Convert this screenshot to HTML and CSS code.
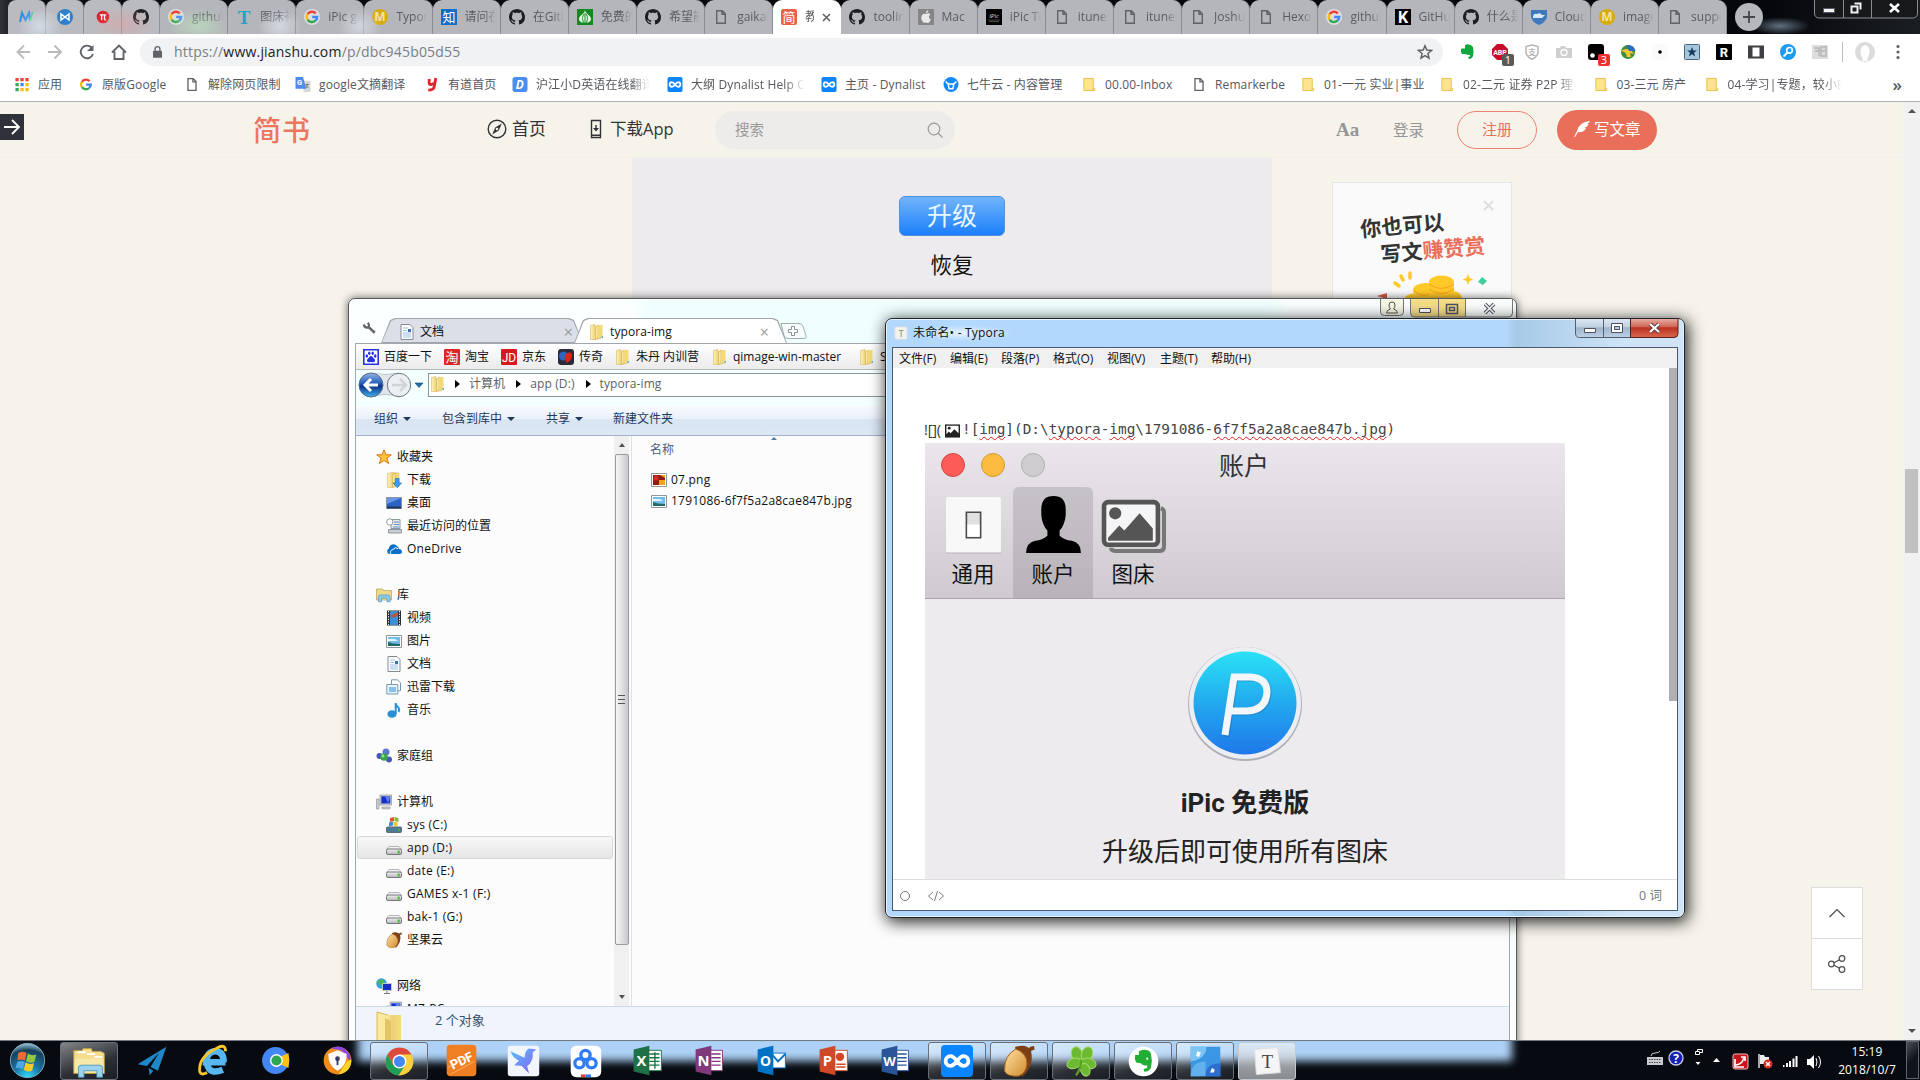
FILE: index.html
```html
<!DOCTYPE html>
<html lang="zh-CN">
<head>
<meta charset="utf-8">
<title>简书</title>
<link rel="stylesheet" href="styles.css">
</head>
<body>
<svg class="defs" width="0" height="0">
<defs>
<linearGradient id="gFold" x1="0" x2="1"><stop offset="0" stop-color="#fff3b5"/><stop offset=".45" stop-color="#ecd277"/><stop offset="1" stop-color="#f6dc7c"/></linearGradient>
<linearGradient id="gP" x1="0" y1="0" x2="0" y2="1"><stop offset="0" stop-color="#2ae2f5"/><stop offset=".5" stop-color="#22a9ee"/><stop offset="1" stop-color="#1f78ea"/></linearGradient>
<linearGradient id="gNut" x1="0" x2="1" y2="1"><stop offset="0" stop-color="#ffe2a0"/><stop offset="1" stop-color="#d08a30"/></linearGradient>
<radialGradient id="gOrb" cx=".5" cy="1" r="1"><stop offset="0" stop-color="#2fe0ff"/><stop offset=".4" stop-color="#1b76a8"/><stop offset=".8" stop-color="#174059"/><stop offset="1" stop-color="#9cc6da"/></radialGradient>
<linearGradient id="gBack" x1="0" y1="0" x2="0" y2="1"><stop offset="0" stop-color="#8fb4e6"/><stop offset=".45" stop-color="#2257b8"/><stop offset=".55" stop-color="#0b2e86"/><stop offset="1" stop-color="#42b3f0"/></linearGradient>
<linearGradient id="gBird" x1="0" y1="0" x2="1" y2="1"><stop offset="0" stop-color="#55c3ff"/><stop offset="1" stop-color="#8a5cf0"/></linearGradient>
<linearGradient id="gRed" x1="0" y1="0" x2="0" y2="1"><stop offset="0" stop-color="#e8b3a6"/><stop offset=".45" stop-color="#d0675a"/><stop offset=".5" stop-color="#bb3220"/><stop offset="1" stop-color="#d8694c"/></linearGradient>
<linearGradient id="gCtl" x1="0" y1="0" x2="0" y2="1"><stop offset="0" stop-color="#dfe9f4"/><stop offset=".45" stop-color="#c3d2e2"/><stop offset=".5" stop-color="#a0b4ca"/><stop offset="1" stop-color="#bdd2e6"/></linearGradient>
<linearGradient id="gDrive" x1="0" y1="0" x2="0" y2="1"><stop offset="0" stop-color="#f2f2f4"/><stop offset="1" stop-color="#b4b4ba"/></linearGradient>
</defs>
</svg>
<svg class="symbols">
<symbol id="github" viewBox="0 0 16 16"><path fill="#1b1f23" d="M8 0C3.58 0 0 3.58 0 8c0 3.54 2.29 6.53 5.47 7.59.4.07.55-.17.55-.38 0-.19-.01-.82-.01-1.49-2.01.37-2.53-.49-2.69-.94-.09-.23-.48-.94-.82-1.13-.28-.15-.68-.52-.01-.53.63-.01 1.08.58 1.23.82.72 1.21 1.87.87 2.33.66.07-.52.28-.87.51-1.07-1.78-.2-3.64-.89-3.64-3.95 0-.87.31-1.59.82-2.15-.08-.2-.36-1.02.08-2.12 0 0 .67-.21 2.2.82.64-.18 1.32-.27 2-.27s1.36.09 2 .27c1.53-1.04 2.2-.82 2.2-.82.44 1.1.16 1.92.08 2.12.51.56.82 1.27.82 2.15 0 3.07-1.87 3.75-3.65 3.95.29.25.54.73.54 1.48 0 1.07-.01 1.93-.01 2.2 0 .21.15.46.55.38A8.01 8.01 0 0 0 16 8c0-4.42-3.58-8-8-8Z"/></symbol>
<symbol id="google" viewBox="0 0 16 16"><circle cx="8" cy="8" r="8" fill="#fff" opacity=".55"/><g fill="none" stroke-width="2.4"><path stroke="#ea4335" d="M3.6 5.2A5.2 5.2 0 0 1 11.8 4.4"/><path stroke="#fbbc05" d="M3.6 5.2a5.2 5.2 0 0 0 0 5.6"/><path stroke="#34a853" d="M3.6 10.8a5.2 5.2 0 0 0 7.8.9"/><path stroke="#4285f4" d="M11.4 11.7A5.2 5.2 0 0 0 13.2 8H8.2"/></g></symbol>
<symbol id="page" viewBox="0 0 16 16"><path fill="none" stroke="#5f6368" stroke-width="1.4" d="M3.7 1.7h5.6l3 3.2v9.4H3.7zM9 2v3.2h3"/></symbol>
<symbol id="mx" viewBox="0 0 16 16"><path fill="none" stroke="#2b8de3" stroke-width="2" d="M2 13 4 4l3.5 7L11 4l1 8"/><path stroke="#35d07f" stroke-width="1.8" d="M12 12l2.5-9"/></symbol>
<symbol id="bow" viewBox="0 0 16 16"><circle cx="8" cy="8" r="8" fill="#2f80c8"/><path fill="none" stroke="#fff" stroke-width="1.5" d="M4 5v6l8-6v6z"/></symbol>
<symbol id="pi" viewBox="0 0 16 16"><circle cx="8" cy="8" r="6.3" fill="#d5212b"/><path fill="none" stroke="#fff" stroke-width="1.3" d="M4.8 5.9h6.4M6.6 6v5M9.5 6v4q0 1 1.2 1"/></symbol>
<symbol id="ty" viewBox="0 0 16 16"><text x="8" y="15" text-anchor="middle" font-size="19" font-weight="700" font-family="Liberation Serif" fill="#1ea6c0">T</text></symbol>
<symbol id="mm" viewBox="0 0 16 16"><circle cx="8" cy="8" r="8" fill="#d6ab10"/><text x="8" y="12.3" text-anchor="middle" font-size="12" font-weight="700" font-family="Open Sans" fill="#f3e3a3">M</text></symbol>
<symbol id="zhi" viewBox="0 0 16 16"><path fill="#0f6fc5" d="M0 0h16v16H0z"/><text x="8" y="12.8" text-anchor="middle" font-size="13" font-family="Noto Sans CJK SC" fill="#fff">知</text></symbol>
<symbol id="garlic" viewBox="0 0 16 16"><path fill="#128a22" d="M0 0h16v16H0z"/><path fill="#e7f2e2" d="M8 1c0 4 6 5 6 9 0 3-4 4-6 4s-6-1-6-4c0-4 6-5 6-9z"/><path stroke="#128a22" fill="none" d="M8 4v10M7 5c-2 3-2 6 0 9M9 5c2 3 2 6 0 9"/></symbol>
<symbol id="jian" viewBox="0 0 16 16"><rect width="16" height="16" rx="2" fill="#e8624a"/><text x="8" y="12.8" text-anchor="middle" font-size="13" font-family="Noto Sans CJK SC" fill="#fff">简</text></symbol>
<symbol id="apple" viewBox="0 0 16 16"><path fill="#858585" d="M0 0h16v16H0z"/><path fill="#e8e8e8" d="M8 5c2-1.3 3.700-.5 4.300.7-2 1.300-1.600 3.900.6 4.800C12 13 10.500 14.700 8 13.500 5.500 14.700 3.500 12 3.300 9 3.200 6 5.500 3.700 8 5zM8 4.200C8 2.500 9 1.500 10.300 1.300 10.300 3 9.400 4 8 4.200z"/></symbol>
<symbol id="ipic" viewBox="0 0 16 16"><path d="M0 0h16v16H0z"/><text x="8" y="9" text-anchor="middle" font-size="6" font-style="italic" font-family="Liberation Serif" fill="#ddd">iPic</text><path stroke="#777" stroke-width=".6" d="M2 11h12M3 12.500h10"/></symbol>
<symbol id="kk" viewBox="0 0 16 16"><path d="M0 0h16v16H0z"/><text x="8" y="14" text-anchor="middle" font-size="16" font-weight="700" font-family="Roboto" fill="#fff">K</text></symbol>
<symbol id="cloud" viewBox="0 0 16 16"><path fill="#3e78bd" d="M0 1h16v7q-1 5-8 8-7-3-8-8z"/><path fill="#dbe8f5" d="M2 7q1-3 4-2 3-2 5 1h3L11 9H2z"/></symbol>
<symbol id="gtr" viewBox="0 0 16 16"><path fill="#d8d8d8" d="M6 4h10v12H9z"/><path fill="#4f8af0" d="M0 0h8l3.500 12.500H0z"/><text x="4.500" y="8.500" text-anchor="middle" font-size="8" font-weight="700" font-family="Roboto" fill="#fff">G</text><path stroke="#777" fill="none" d="M10.500 8h4M12.500 7v1q0 3-2 4M11 9q2 2 3 3"/></symbol>
<symbol id="youdao" viewBox="0 0 16 16"><path fill="none" stroke="#e3242b" stroke-width="3" d="M5 2v4q0 2 2 2t4-2M12 1 10.500 10Q10 14 4 14"/></symbol>
<symbol id="dd" viewBox="0 0 16 16"><rect width="16" height="16" rx="3" fill="#4a8ff0"/><text x="8" y="12.600" text-anchor="middle" font-size="13" font-weight="700" font-style="italic" font-family="Open Sans" fill="#fff">D</text></symbol>
<symbol id="dyna" viewBox="0 0 16 16"><rect width="16" height="16" rx="2" fill="#0a84ff"/><path fill="none" stroke="#fff" stroke-width="1.900" d="M8 8C6.500 6 5.700 5.600 4.700 5.600a2.400 2.400 0 0 0 0 4.800C5.700 10.400 6.500 10 8 8s2.300-2.400 3.300-2.400a2.400 2.400 0 0 1 0 4.800C10.300 10.400 9.500 10 8 8z"/></symbol>
<symbol id="niu" viewBox="0 0 16 16"><circle cx="8" cy="8" r="8" fill="#1489ff"/><path fill="none" stroke="#fff" stroke-width="1.600" d="M2.500 4.500q1 3 5.500 3t5.500-3M5 7.500l1 5h4l1-5"/></symbol>
<symbol id="cfold" viewBox="0 0 16 16"><path fill="#ffe48f" stroke="#e7bf43" d="M2.500 1.500h10v10.500h1.500v2.500H2.500zM12.500 12l-1 2.500"/></symbol>
<symbol id="fold" viewBox="0 0 16 16"><path fill="url(#gFold)" stroke="#cfae55" stroke-width=".5" d="M1.500 1.500 6 .5V3h0l6-1.500v13L6 15.500H1.500z"/><path fill="#f8e7a0" stroke="#c9a347" stroke-width=".5" d="M6.500 3.500 9 .8V14l-2.500 1.700z"/><path fill="#f4d978" d="M9 1h4.500v13H9z"/><path fill="#5fb4d8" d="M12.500 12h1.500v2h-1.500z"/></symbol>
<symbol id="doc" viewBox="0 0 16 16"><path fill="#fdfdfd" stroke="#858b93" d="M2 .5h9l3 3v12H2z"/><path stroke="#9fc0e6" d="M4 4h5M4 6.500h4M4 9h8M4 11h8M4 13h8"/><path fill="#3570b8" d="M9 5h3v3H9z"/></symbol>
<symbol id="star" viewBox="0 0 16 16"><path fill="#ffc03a" stroke="#e07a1c" d="m8 .8 2 5h5.300L11 9l1.700 5.700L8 11.500l-4.700 3.200L5 9 .7 5.800H6z"/></symbol>
<symbol id="down" viewBox="0 0 16 16"><path fill="url(#gFold)" stroke="#cfae55" stroke-width=".5" d="M1.500 1.500 6 .5 13 1v13l-7 1.500H1.500z"/><path fill="#f8e7a0" stroke="#c9a347" stroke-width=".5" d="M6.500 3.500 9 .8V14l-2.500 1.700z"/><path fill="#3aa0ea" stroke="#1c6fb5" stroke-width=".7" d="M9.500 6.500h3.500v4.500h2.500L11.300 15.700 7 11h2.500z"/></symbol>
<symbol id="desk" viewBox="0 0 16 16"><path fill="#2c62c4" stroke="#8792a3" d="M.5 2.500h15v11H.5z"/><path fill="#6796e6" d="M1 3h14L1 9z"/><path fill="#1b335d" d="M1 11.500h14v2H1z"/></symbol>
<symbol id="recent" viewBox="0 0 16 16"><path fill="#e4e9ee" stroke="#8d97a1" d="M5 1.500h9v9H5z"/><path fill="#c9ced3" stroke="#8d97a1" d="M2.500 11.500h13v3.500h-13z"/><circle cx="3.800" cy="4" r="3.200" fill="#fff" stroke="#999"/><path stroke="#5b93cb" fill="none" d="M8 4h5M8 6.500h5M7 9h6"/></symbol>
<symbol id="one" viewBox="0 0 16 16"><path fill="#0a6fc9" d="M3 13A3 3 0 0 1 3 7.500 4.500 4.500 0 0 1 11 5a4 4 0 0 1 2 3q3 .5 3 2.800T13 13z"/><path fill="none" stroke="#fff" d="M5 13.500Q3 9.500 7 8.500q2-3 5-1"/></symbol>
<symbol id="lib" viewBox="0 0 16 16"><path fill="#ecd88a" stroke="#b9a14d" stroke-width=".7" d="M.5 2h6l1 1.500h8V13H.5z"/><path fill="#8ccdf0" stroke="#4596c7" stroke-width=".7" d="M2.500 14.800V10q0-2 2-2h7.500q2 0 2 2v4.800h-3V11h-5.500v3.800z"/></symbol>
<symbol id="video" viewBox="0 0 16 16"><path fill="#2b2f33" d="M1 .5h14v15H1z"/><path fill="#3f8ed2" d="M4 1h8v14H4z"/><path fill="#b9563c" d="m4 6 8-4v3L8 8z"/><path stroke="#fff" stroke-dasharray="1.300 1.300" d="M2.500 1v14M13.500 1v14"/></symbol>
<symbol id="pic" viewBox="0 0 16 16"><path fill="#fff" stroke="#8f969c" d="M.5 2.500h15v12H.5z"/><path fill="#72bdea" d="M2 4h12v9H2z"/><path fill="#e6f6ff" d="M2 6h7l3 2H2z"/><path fill="#1d6d66" d="m2 9 5 1.500 7 .5v2H2z"/></symbol>
<symbol id="png" viewBox="0 0 16 16"><path fill="#fff" stroke="#8f969c" d="M.5 1.500h15v13H.5z"/><path fill="#8f1d14" d="M2 3h12v10H2z"/><path fill="#f2a31b" d="M8 8h6v5H8zM9 3h5v3z"/><circle cx="5" cy="6" r="2.500" fill="#d33021"/></symbol>
<symbol id="xl" viewBox="0 0 16 16"><path fill="#fff" stroke="#7698b5" d="M5.500.8h6l3 3v8h-9z"/><path fill="#eaf5ff" stroke="#7698b5" d="M.8 5.500h11v9.500H.8z"/><path fill="#85c0ee" d="M3 8h7v5H3z"/></symbol>
<symbol id="music" viewBox="0 0 16 16"><ellipse cx="6" cy="12" rx="4.600" ry="3.800" fill="#2b8fd6"/><path fill="none" stroke="#2b8fd6" stroke-width="2" d="M9.700 12V1q.3 3 3 5 1 1.500-.2 4"/></symbol>
<symbol id="home" viewBox="0 0 16 16"><circle cx="3.500" cy="8" r="3" fill="#4657b6"/><circle cx="10" cy="4" r="3.500" fill="#5b77cf"/><circle cx="13" cy="11.500" r="3" fill="#4657b6"/><circle cx="8" cy="9" r="3.800" fill="#3aa447"/><circle cx="7" cy="8" r="1.400" fill="#a0e09d"/></symbol>
<symbol id="pc" viewBox="0 0 16 16"><path fill="#cfd2d6" stroke="#8d9298" stroke-width=".7" d="M4 1h11.500v10H4zM.5 5h2.500v10H.5zM6 13h8v1.800H6z"/><path fill="#1730c8" d="M5.300 2.300h9v7.200h-9z"/><path fill="#6080ea" d="m9 2.300 5.300 0-2 7.200z"/></symbol>
<symbol id="drive" viewBox="0 0 16 16"><path fill="#f4f4f6" stroke="#a3a3a8" stroke-width=".8" d="M3 6.500h10l2.500 3H.5z"/><rect x=".5" y="9" width="15" height="5.500" rx="1.500" fill="url(#gDrive)" stroke="#76767c"/><path fill="#35c51f" d="M11.700 10.500h2v3h-2z"/></symbol>
<symbol id="cdrive" viewBox="0 0 16 16"><path fill="#e5542e" d="m4 1 4-1v4l-4 1z"/><path fill="#7fbd3c" d="m8.500 0 4 1v4l-4-1z"/><path fill="#3a8fd6" d="m3 5.500 4-1v4l-4 1z"/><path fill="#f3c42a" d="m7.500 4.500 4 1v4l-4-1z"/><rect x=".5" y="10" width="15" height="5.500" rx="1" fill="#4b7c93" stroke="#5b6d76"/><path fill="#35c51f" d="M12 12h2v2h-2z"/></symbol>
<symbol id="nut" viewBox="0 0 16 16"><path fill="#7d3f14" d="M6 1q6-2 8 2 1.500 6-2.500 11l-2 2z"/><path fill="#7d3f14" d="M12.500 2q1-1.500 3-1.500l.3 1.800-2.300 1z"/><path fill="url(#gNut)" stroke="#a2621f" stroke-width=".5" d="M6.500 2Q12 4 12 9.500 11.500 14 8 15.500 2 16 .8 13 .5 5 6.500 2z"/></symbol>
<symbol id="net" viewBox="0 0 16 16"><circle cx="5.500" cy="5.500" r="5.300" fill="#36a4d8"/><path fill="#4fb648" d="M2 3q4-3 6 0L6 7q-4 0-4-4z"/><path fill="#1730c8" stroke="#c4cad1" d="M6.500 5.500h9v7h-9z"/><path stroke="#777" d="M11 13v2.500M8 15.500h6"/></symbol>
<symbol id="baidu" viewBox="0 0 16 16"><path fill="#fff" stroke="#2932e1" stroke-width="1.600" d="M.8.800h14.400v14.400H.8z"/><g fill="#2932e1"><ellipse cx="3.800" cy="7" rx="1.300" ry="1.700"/><ellipse cx="6.300" cy="4.300" rx="1.200" ry="1.700"/><ellipse cx="9.700" cy="4.300" rx="1.200" ry="1.700"/><ellipse cx="12.200" cy="7" rx="1.300" ry="1.700"/><path d="M8 7q1.500 0 2.500 2 2 1.500 1.500 3.200-.6 1.300-4 .8-3.400.5-4-.8-.5-1.700 1.500-3.200Q6.500 7 8 7z"/></g></symbol>
<symbol id="tao" viewBox="0 0 16 16"><rect width="16" height="16" rx="1" fill="#dd2727"/><text x="8" y="13" text-anchor="middle" font-size="13" font-family="Noto Sans CJK SC" fill="#fff">淘</text></symbol>
<symbol id="jd" viewBox="0 0 16 16"><rect width="16" height="16" rx="1" fill="#d71a20"/><text x="8" y="12.500" text-anchor="middle" font-size="12" font-family="Roboto" fill="#fff">JD</text></symbol>
<symbol id="cq" viewBox="0 0 16 16"><rect width="16" height="16" rx="3" fill="#2a2a38"/><circle cx="5.500" cy="7" r="4.500" fill="#2e63bf"/><path fill="#e22219" d="M7 6q4-5 7-1 1 5-5 9-3-4-2-8z"/></symbol>
<symbol id="feather" viewBox="0 0 16 16"><path fill="currentColor" d="M16 0Q5 1 3 10L0 16l1 0 3-5q6 1 8-4l-2 0 3-1.500q1-1 1.500-2.500l-1.700.2Q15.500 2 16 0z"/></symbol>
</svg>

<div class="desktop">
<section class="chrome">
  <header class="tabs">
    <div class="pins"><i><svg><use href="#mx"/></svg></i><i><svg><use href="#bow"/></svg></i><i><svg><use href="#pi"/></svg></i><i><svg><use href="#github"/></svg></i></div>
    <div class="tab"><svg><use href="#google"/></svg><span>github</span></div>
    <div class="tab"><svg><use href="#ty"/></svg><span>图床神</span></div>
    <div class="tab"><svg><use href="#google"/></svg><span>iPic gi</span></div>
    <div class="tab"><svg><use href="#mm"/></svg><span>Typor</span></div>
    <div class="tab"><svg><use href="#zhi"/></svg><span>请问在</span></div>
    <div class="tab"><svg><use href="#github"/></svg><span>在Gith</span></div>
    <div class="tab"><svg><use href="#garlic"/></svg><span>免费的</span></div>
    <div class="tab"><svg><use href="#github"/></svg><span>希望能</span></div>
    <div class="tab"><svg><use href="#page"/></svg><span>gaikan</span></div>
    <div class="tab active"><svg><use href="#jian"/></svg><span>教</span><svg class="x" viewBox="0 0 9 9"><path d="M1 1l7 7M8 1 1 8"/></svg></div>
    <div class="tab"><svg><use href="#github"/></svg><span>toolin</span></div>
    <div class="tab"><svg><use href="#apple"/></svg><span>Mac</span></div>
    <div class="tab"><svg><use href="#ipic"/></svg><span>iPic To</span></div>
    <div class="tab"><svg><use href="#page"/></svg><span>itunes</span></div>
    <div class="tab"><svg><use href="#page"/></svg><span>itunes</span></div>
    <div class="tab"><svg><use href="#page"/></svg><span>Joshu</span></div>
    <div class="tab"><svg><use href="#page"/></svg><span>Hexo</span></div>
    <div class="tab"><svg><use href="#google"/></svg><span>github</span></div>
    <div class="tab"><svg><use href="#kk"/></svg><span>GitHu</span></div>
    <div class="tab"><svg><use href="#github"/></svg><span>什么是</span></div>
    <div class="tab"><svg><use href="#cloud"/></svg><span>Cloud</span></div>
    <div class="tab"><svg><use href="#mm"/></svg><span>image</span></div>
    <div class="tab"><svg><use href="#page"/></svg><span>suppo</span></div>
    <b class="plus"><svg viewBox="0 0 14 14"><path d="M7 1v12M1 7h12"/></svg></b>
    <svg class="winctl" viewBox="0 0 104 19"><path fill="#16181a" stroke="#8b8e91" d="M.5-1V13q0 5 5 5h93q5 0 5-5V-1M29.500 0v18M57.500 0v18"/><path fill="#f4f4f4" stroke="#555a66" d="M9.500 8.500h11v4h-11z"/><path fill="none" stroke="#f0f0f0" stroke-width="2" d="M37.500 6.500h6v6h-6zM40.500 3.500h6v6"/><path stroke="#fff" stroke-width="2.600" d="m76 4 9 8M85 4l-9 8"/></svg>
  </header>
  <div class="toolbar">
    <svg class="nav" viewBox="0 0 128 18"><g fill="none" stroke-width="1.900"><path stroke="#b9bbbe" d="M14 9H1.500M8 2.500 1.500 9 8 15.500M32 9h13M38.500 2.500 45 9l-6.500 6.500"/><path stroke="#5f6368" d="M75.500 4.500A6.300 6.300 0 1 0 77 11"/><path stroke="#5f6368" d="m96 9.500 7-7 7 7M98.500 8.500V16h9V8.500"/></g><path fill="#5f6368" d="M77.500 2v6H71z"/></svg>
    <div class="omni">
      <svg class="lock" viewBox="0 0 10 13"><rect y="5" width="10" height="8" rx="1" fill="#5f6368"/><path fill="none" stroke="#5f6368" stroke-width="1.500" d="M2.300 5.500V3.300a2.700 2.700 0 0 1 5.400 0v2.200"/></svg>
      <span class="url">https://<b>www.jianshu.com</b>/p/dbc945b05d55</span>
      <svg class="fav" viewBox="0 0 16 16"><path fill="none" stroke="#5f6368" stroke-width="1.500" d="m8 1.800 1.800 4.300 4.700.4-3.600 3 1.100 4.600L8 11.600l-4 2.500 1.100-4.600-3.600-3 4.700-.4z"/></svg>
    </div>
    <div class="exts">
      <i><svg viewBox="0 0 16 16"><path fill="#0fa83c" d="M5 1q5-2 8 2 1 5 0 9-1 3-4 3l-1-2 2-.5V11Q7 11 5 10H2Q0 7 1.500 4.500H5z"/></svg></i>
      <i><svg viewBox="0 0 16 16"><path fill="#c70d2c" d="M5 0h6l5 5v6l-5 5H5l-5-5V5z"/><text x="8" y="10.500" text-anchor="middle" font-size="7" font-weight="700" font-family="Roboto" fill="#fff">ABP</text></svg><em>1</em></i>
      <i><svg viewBox="0 0 16 16"><path fill="none" stroke="#b5b5b5" stroke-width="1.500" d="M8 1 14 2.500V9q-1 4-6 6.300Q3 13 2 9V2.500z"/><text x="8" y="11" text-anchor="middle" font-size="8" font-family="Noto Sans CJK SC" fill="#999">支</text></svg></i>
      <i><svg viewBox="0 0 16 16"><path fill="#cfcfcf" d="M0 4h4l1-2h4l1 2h6v10H0z"/><circle cx="8" cy="8.500" r="3" fill="none" stroke="#fff" stroke-width="1.300"/></svg></i>
      <i><svg viewBox="0 0 16 16"><rect width="16" height="16" rx="3"/><circle cx="4.500" cy="11.500" r="2.300" fill="#fff"/></svg><em class="red">3</em></i>
      <i><svg viewBox="0 0 16 16"><circle cx="8" cy="8" r="7" fill="#3f8f3a"/><path fill="#f3c62f" d="M1 7q5 0 6 6h4l-1-4 4 1Q9 2 1 7z"/><path fill="#2d6cc0" d="M6 1q8-1 9.500 6L9 7z"/></svg></i>
      <i><svg viewBox="0 0 16 16"><rect width="16" height="16" rx="3" fill="#fafafa"/><circle cx="8" cy="8" r="1.800"/></svg></i>
      <i><svg viewBox="0 0 16 16"><rect x=".5" y=".5" width="15" height="15" rx="1" fill="#a6c6dc" stroke="#47667e"/><path fill="#173b60" d="m8 3 1.300 3.500H13l-3 2.300 1.200 3.700L8 10.300l-3.200 2.200L6 8.800l-3-2.300h3.700z"/></svg></i>
      <i><svg viewBox="0 0 16 16"><rect width="16" height="16" rx="1"/><text x="8" y="12.800" text-anchor="middle" font-size="13" font-weight="700" font-family="Roboto" fill="#fff">R</text></svg></i>
      <i><svg viewBox="0 0 16 16"><path fill="#3d3f42" d="M0 1.500h16v13H0z"/><path fill="#fff" d="M4.500 3.500h7v9h-7z"/></svg></i>
      <i><svg viewBox="0 0 16 16"><circle cx="8" cy="8" r="8" fill="#1c9bf3"/><circle cx="9.500" cy="6.300" r="2.800" fill="none" stroke="#fff" stroke-width="1.700"/><path stroke="#fff" stroke-width="1.800" d="m7.500 8.500-4 4"/></svg></i>
      <i><svg viewBox="0 0 16 16"><path fill="#ddd" d="M0 1h16v14H0z"/><path stroke="#b5b5b5" stroke-width="1.400" fill="none" d="M2 4h5v8M3 7h4M9 3v9h5V3zM9 7h5"/></svg></i>
    </div>
    <svg class="user" viewBox="0 0 70 24"><path stroke="#bcbec1" d="M6.500 2v20"/><circle cx="29" cy="12" r="10" fill="#d9dbdd"/><path fill="#fff" d="M29 5q5 1 4.500 7-.5 4-2 6v3h-5v-3q-2-2-2-6 0-6 4.500-7z"/><g fill="#5f6368"><circle cx="62" cy="6.500" r="1.600"/><circle cx="62" cy="12" r="1.600"/><circle cx="62" cy="17.500" r="1.600"/></g></svg>
  </div>
  <nav class="marks">
    <a><svg viewBox="0 0 16 16"><path fill="#ea4335" d="M1 1h3.500v3.500H1zM6.300 1h3.500v3.500H6.300zM11.600 1h3.500v3.500h-3.500z"/><path fill="#34a853" d="M1 6.300h3.500v3.500H1zM1 11.600h3.500v3.500H1z"/><path fill="#4285f4" d="M6.300 6.300h3.500v3.500H6.300z"/><path fill="#fbbc05" d="M11.600 6.300h3.500v3.500h-3.500zM6.300 11.600h3.500v3.500H6.300zM11.600 11.600h3.500v3.500h-3.500z"/></svg>应用</a>
    <a><svg><use href="#google"/></svg>原版Google</a>
    <a><svg><use href="#page"/></svg>解除网页限制</a>
    <a><svg><use href="#gtr"/></svg>google文摘翻译</a>
    <a><svg><use href="#youdao"/></svg>有道首页</a>
    <a class="cut"><svg><use href="#dd"/></svg>沪江小D英语在线翻译</a>
    <a class="cut"><svg><use href="#dyna"/></svg>大纲 Dynalist Help C</a>
    <a><svg><use href="#dyna"/></svg>主页 - Dynalist</a>
    <a><svg><use href="#niu"/></svg>七牛云 - 内容管理</a>
    <a><svg><use href="#cfold"/></svg>00.00-Inbox</a>
    <a><svg><use href="#page"/></svg>Remarkerbe</a>
    <a><svg><use href="#cfold"/></svg>01-一元 实业|事业</a>
    <a class="cut"><svg><use href="#cfold"/></svg>02-二元 证券 P2P 理</a>
    <a><svg><use href="#cfold"/></svg>03-三元 房产</a>
    <a class="cut"><svg><use href="#cfold"/></svg>04-学习|专题，较小的</a>
    <b>»</b>
  </nav>
  <main class="page">
    <div class="view">
      <div class="jnav">
        <span class="logo">简书</span>
        <span class="item"><svg viewBox="0 0 20 20"><circle cx="10" cy="10" r="8.800" fill="none" stroke="#333" stroke-width="1.400"/><path fill="#333" d="m14.800 4.500-3 7-6.600 4 3-7z"/><circle cx="10" cy="10" r="1.300" fill="#f7f3eb"/></svg>首页</span>
        <span class="item"><svg viewBox="0 0 20 20"><path fill="none" stroke="#333" stroke-width="1.400" d="M5.500 1.500h9v17h-9zM5.500 16.300h9M10 6v4"/><path fill="#333" d="M7 9h6l-3 3.500z"/></svg>下载App</span>
        <span class="search">搜索<svg viewBox="0 0 16 16"><circle cx="7" cy="7" r="5.800"/><path d="m11 11 4.500 4.500"/></svg></span>
        <span class="aa">Aa</span><span class="login">登录</span><span class="reg">注册</span><span class="write"><svg><use href="#feather"/></svg>写文章</span>
      </div>
      <div class="article">
        <div class="shot"><span class="up">升级</span><span class="restore">恢复</span></div>
        <aside class="ad">
          <svg viewBox="0 0 180 130"><path stroke="#ddd" stroke-width="1.800" d="m152 19 9 9M161 19l-9 9"/><g transform="translate(2 3) rotate(-5 60 50)" font-family="Noto Sans CJK SC" font-weight="700" font-size="21" fill="#333"><text x="27" y="49">你也可以</text><text x="45" y="76">写文<tspan fill="#ea6f5a">赚赞赏</tspan></text></g><g stroke="#ffca28" stroke-width="3.500" stroke-linecap="round"><path d="m63 101 4 3M69 94l2 4M78 91v5"/></g><g fill="#ffc928"><ellipse cx="94" cy="108" rx="13" ry="7"/><ellipse cx="85" cy="118" rx="13" ry="7"/><ellipse cx="120" cy="116" rx="10" ry="7"/><path d="M97 101h25v20H97z"/><ellipse cx="109.500" cy="100" rx="12.500" ry="6.500"/></g><path fill="none" stroke="#ff9f1c" d="M97 102q12 9 25 0M97 107q12 9 25 0M82 109q9 7 15 3"/><path fill="#ffc928" d="m136 92 1.500 4 4 1.500-4 1.500-1.500 4-1.500-4-4-1.500 4-1.500z"/><path fill="#3dcf97" d="m150 95 5 4-4 4-5-3z"/><path fill="#d8584a" d="m45 114 10-3v6z"/></svg>
        </aside>
      </div>
      <div class="side"><i><svg viewBox="0 0 18 18"><path d="m1.500 13 7.500-7.500 7.500 7.500"/></svg></i><i><svg viewBox="0 0 18 18"><circle cx="3.300" cy="9" r="2.800"/><circle cx="14" cy="3.500" r="2.800"/><circle cx="14" cy="14.500" r="2.800"/><path d="m6 7.800 5.500-3M6 10.300l5.500 3"/></svg></i></div>
      <div class="drawer"><svg viewBox="0 0 20 20"><path d="M2 10h15M10 3l7 7-7 7"/></svg></div>
    </div>
    <div class="vbar"><i class="u"></i><b></b><i class="d"></i></div>
  </main>
</section>

<section class="win explorer">
  <div class="etop">
    <svg class="ectl" viewBox="0 0 134 19"><path fill="#f3f0d0" fill-opacity=".6" stroke="#777" d="M.5 0V13q0 3.500 4 3.500h15q4 0 4-3.500V0"/><path fill="#f4dd86" stroke="#777" d="M30.500 0V14q0 4 4 4H85.500V0M58.500 0v18"/><path fill="#fbfdfd" stroke="#777" d="M85.500 0v18h43q4 0 4-4V0"/><path fill="none" stroke="#555" d="M12 3q3 0 3 3t-1.500 4q4 1 4 4h-11q0-3 4-4Q9 9 9 6t3-3z"/><path fill="#fff" stroke="#4c5160" d="M39.500 9.500h11v4h-11z"/><path fill="none" stroke="#4c5160" stroke-width="1.500" d="M66.500 5.500h11v9h-11zM69.500 8.500h5v3h-5z"/><path stroke="#4c5160" stroke-width="3.600" d="m105 5 9 9M114 5l-9 9"/><path stroke="#fff" stroke-width="1.600" d="m105 5 9 9M114 5l-9 9"/></svg>
  </div>
  <div class="etabs">
    <svg class="wrench" viewBox="0 0 16 16"><path fill="none" stroke="#666" stroke-width="3" d="m7 7 7 6.500"/><path fill="none" stroke="#666" stroke-width="2.500" d="M1.500 4Q2 8 6 7.500 9 5 6 2"/></svg>
    <div class="etab"><svg><use href="#doc"/></svg><span>文档</span><u>×</u></div>
    <div class="etab on"><svg><use href="#fold"/></svg><span>typora-img</span><u>×</u></div>
    <svg class="eplus" viewBox="0 0 28 16"><path fill="#f6fbfb" stroke="#a5abae" d="M1 .5h18q3 0 4 3l3 9q1 3-3 3H8q-3 0-4-3z"/><path fill="#fff" stroke="#8c9194" d="M11.500 3.500h3v3h3v3h-3v3h-3v-3h-3v-3h3z"/></svg>
  </div>
  <div class="ebody">
    <div class="emarks"><a><svg><use href="#baidu"/></svg>百度一下</a><a><svg><use href="#tao"/></svg>淘宝</a><a><svg><use href="#jd"/></svg>京东</a><a><svg><use href="#cq"/></svg>传奇</a><a><svg><use href="#fold"/></svg>朱丹 内训营</a><a><svg><use href="#fold"/></svg>qimage-win-master</a><a><svg><use href="#fold"/></svg>S</a></div>
    <div class="eaddr">
      <svg class="bf" viewBox="0 0 72 28"><path fill="#dfe5ea" stroke="#9aa5ad" stroke-width=".6" d="M14 2q15 3 28 0v24q-13-5-28 0z"/><circle cx="14" cy="14" r="12" fill="url(#gBack)" stroke="#5a6d84"/><circle cx="42" cy="14" r="11.700" fill="#edf0f2" stroke="#707a83"/><path stroke="#fff" stroke-width="3" fill="none" d="M21 14H8.500M14 8l-6 6 6 6"/><path stroke="#d0d4d8" stroke-width="2.500" fill="none" d="M35 14h13M43 8l6 6-6 6"/><path fill="#1d6ea8" stroke="#154a73" stroke-width=".6" d="M58 12h8l-4 4.500z"/></svg>
      <div class="abox"><svg><use href="#fold"/></svg><u></u><span>计算机</span><u></u><span>app (D:)</span><u></u><span>typora-img</span></div>
    </div>
    <div class="ecmd"><span>组织<u></u></span><span>包含到库中<u></u></span><span>共享<u></u></span><span>新建文件夹</span></div>
    <div class="epanes">
      <ul class="tree">
        <li class="h"><svg><use href="#star"/></svg>收藏夹</li>
        <li><svg><use href="#down"/></svg>下载</li><li><svg><use href="#desk"/></svg>桌面</li><li><svg><use href="#recent"/></svg>最近访问的位置</li><li class="l"><svg><use href="#one"/></svg>OneDrive</li>
        <li class="h gap"><svg><use href="#lib"/></svg>库</li>
        <li><svg><use href="#video"/></svg>视频</li><li><svg><use href="#pic"/></svg>图片</li><li><svg><use href="#doc"/></svg>文档</li><li><svg><use href="#xl"/></svg>迅雷下载</li><li><svg><use href="#music"/></svg>音乐</li>
        <li class="h gap"><svg><use href="#home"/></svg>家庭组</li>
        <li class="h gap"><svg><use href="#pc"/></svg>计算机</li>
        <li class="l"><svg><use href="#cdrive"/></svg>sys (C:)</li><li class="l sel"><svg><use href="#drive"/></svg>app (D:)</li><li class="l"><svg><use href="#drive"/></svg>date (E:)</li><li class="l"><svg><use href="#drive"/></svg>GAMES x-1 (F:)</li><li class="l"><svg><use href="#drive"/></svg>bak-1 (G:)</li><li><svg><use href="#nut"/></svg>坚果云</li>
        <li class="h gap"><svg><use href="#net"/></svg>网络</li>
        <li class="l"><svg><use href="#pc"/></svg>MZ-PC</li>
      </ul>
      <div class="esb"><i class="u"></i><b><s></s></b><i class="d"></i></div>
      <div class="files"><p class="col">名称</p><p><svg><use href="#png"/></svg>07.png</p><p><svg><use href="#pic"/></svg>1791086-6f7f5a2a8cae847b.jpg</p></div>
    </div>
    <div class="estat"><svg viewBox="0 0 32 32"><path fill="#fbe99c" stroke="#d8bb5d" d="M1 1l14 4v30H1z"/><path fill="url(#gFold)" d="M12 4h13v30H9z"/><path fill="#e3c468" d="M9 7l6 3v22H9z"/></svg><span>2 个对象</span></div>
  </div>
</section>

<section class="win typora">
  <div class="ttitle"><svg viewBox="0 0 16 16"><rect x="1" y="1" width="14" height="14" rx="1" fill="#f3f3f3" stroke="#ddd"/><text x="8" y="12" text-anchor="middle" font-size="10" font-family="Roboto" fill="#888">T</text></svg><span>未命名• - Typora</span>
    <svg class="tctl" viewBox="0 0 104 20"><path fill="url(#gCtl)" stroke="#545e6b" d="M.5-1V14q0 4.500 4 4.500h51V-1M28.500 0v18.500"/><path fill="url(#gRed)" stroke="#5a1c16" d="M55.500-1v19.500H99q4 0 4-4V-1"/><path fill="#fff" stroke="#4c5160" d="M9.500 9.500h11v4h-11z"/><path fill="#fff" stroke="#4c5160" d="M36.500 4.500h11v9h-11z"/><path fill="#b9cbdc" stroke="#4c5160" d="M39.500 7.500h5v3h-5z"/><path stroke="#5d3a3f" stroke-width="4" d="m75 5 9 8M84 5l-9 8"/><path stroke="#fff" stroke-width="2.200" d="m75 5 9 8M84 5l-9 8"/></svg></div>
  <div class="tbody">
    <div class="tmenu"><span>文件(F)</span><span>编辑(E)</span><span>段落(P)</span><span>格式(O)</span><span>视图(V)</span><span>主题(T)</span><span>帮助(H)</span></div>
    <div class="tedit">
      <div class="doc">
        <div class="src"><span class="lead">![](</span><svg viewBox="0 0 16 14"><path fill="#222" d="M0 0h16v14H0z"/><path fill="#fff" d="M1.500 1.500h13v8L10 5 6 9.500l-2-2-2.500 3z"/><circle cx="4.500" cy="4" r="1.500" fill="#222"/></svg><code>![<q>img</q>](D:\<q>typora</q>-<q>img</q>\1791086-<q>6f7f5a2a8cae847b.jpg</q>)</code></div>
        <div class="mac">
          <div class="mhead">
            <div class="mrow"><i></i><i></i><i></i><span>账户</span></div>
            <div class="mtabs">
              <div><svg viewBox="0 0 60 60"><rect x="3" y="2" width="54" height="55" rx="2" fill="#f8f8f8"/><path fill="none" stroke="#b8b4b9" d="M3 57h54"/><path fill="#e0e0e0" stroke="#4a4a4a" stroke-width="1.600" d="M23 17h14v25H23z"/><path fill="#fff" d="M24 29h12v12H24z"/></svg>通用</div>
              <div class="msel"><svg viewBox="0 0 60 60"><path d="M30 1q12 0 12 13v6q-1 10-6 15v5q4 4 12 5 9 2 9 12H3q0-10 9-12 8-1 12-5v-5q-5-5-6-15v-6Q18 1 30 1z"/></svg>账户</div>
              <div><svg viewBox="0 0 60 60"><path fill="none" stroke="#777" stroke-width="4" d="M8 52q0 3 4 3h44q4 0 4-4V17q0-3-3-4"/><rect x="1" y="7" width="53" height="42" rx="4" fill="#f5f4f6" stroke="#555" stroke-width="4.500"/><circle cx="12" cy="18" r="6" fill="#555"/><path fill="#555" d="M5 45v-3l11-12 5 5 15-17 13 15v12z"/></svg>图床</div>
            </div>
          </div>
          <div class="mmain">
            <svg class="plogo" viewBox="0 0 120 120"><circle cx="60" cy="61" r="57" fill="#aeb0b8"/><circle cx="60" cy="60" r="56" fill="#eceef3"/><circle cx="60" cy="60" r="51.500" fill="url(#gP)"/><path fill="none" stroke="#2369a6" stroke-opacity=".4" stroke-width="7" d="M41 94 50 35h16q17 1 17 15-1 18-20 19H45"/><path fill="none" stroke="#f3f7fa" stroke-width="7" d="M40 92 49 34h16q17 1 17 15-1 18-20 19H44"/></svg>
            <strong>iPic 免费版</strong><span>升级后即可使用所有图床</span>
          </div>
        </div>
      </div>
      <b class="tsb"></b>
    </div>
    <div class="tstat"><svg viewBox="0 0 46 14"><g fill="none" stroke="#777"><circle cx="6" cy="7" r="4.500"/><path d="m34 3-4.500 4 4.500 4M40 3l4.500 4-4.500 4M38.500 2l-3 10"/></g></svg><span>0 词</span></div>
  </div>
</section>

<footer class="task">
  <div class="glow"></div>
  <div class="apps">
    <i><svg viewBox="0 0 40 40"><circle cx="20" cy="20" r="18.500" fill="url(#gOrb)" stroke="#7fb0c4"/><path fill="#ee6b32" d="M10 12q5-3 9 0l-2 8q-4-2-8 0z"/><path fill="#93c83d" d="M20.500 12.500q4 3 9 1l-2 8q-5 2-9-1z"/><path fill="#4ea9e6" d="M9 21.500q4-2 8 0l-2 8q-4-3-8-.5z"/><path fill="#fbc926" d="M18 22q4 3 9 1l-2 8q-5 2-9-1z"/></svg></i>
    <i class="run"><svg viewBox="0 0 40 40"><path fill="#f4dd8c" stroke="#b99a44" d="M3 8h9l1-2h9l1 3h9l4 2v22H3z"/><path stroke="#fff" stroke-width="2" d="M7 10h9M17 12h9M25 15h9"/><path fill="#f9e9a8" d="M4 17h31v15H4z"/><path fill="#9bd3ee" stroke="#4d99bd" d="M8 37V27q0-3 3-3h20q3 0 3 3v10h-6v-7H14v7z"/></svg></i>
    <i><svg viewBox="0 0 40 40"><path fill="#1f87c9" d="m5 24 31-19-9 26-8-4 9-15-13 14zM17 28l5 3-4 5z"/></svg></i>
    <i><svg viewBox="0 0 40 40"><path fill="none" stroke="#58b7ee" stroke-width="7" d="M33 22H12q1-12 10-12t9 12M13 24q3 12 17 6"/><path fill="none" stroke="#f5c52e" stroke-width="3" d="M33 10q0-9-10-3Q4 16 5 31q1 6 8 2"/></svg></i>
    <i><svg viewBox="0 0 40 40"><circle cx="20" cy="20" r="14.500" fill="#4486f4"/><path fill="#fbc116" d="m25 16 9-4q2 8 0 16l-9-4z"/><circle cx="21" cy="20" r="7" fill="#fff"/><circle cx="21" cy="20" r="5.500" fill="#2ea552"/></svg></i>
    <i><svg viewBox="0 0 40 40"><circle cx="20" cy="20" r="15" fill="#f28a1c"/><path fill="#8a46e8" d="M13 7q12-6 19 5 3 5 2 9L24 9z"/><path fill="#fbd329" d="M35 19q0 14-14 16l9-14z"/><path fill="#fff" d="m20 9 10 4q0 13-10 18Q10 26 10 13z"/><circle cx="20" cy="18" r="2.500" fill="#333c60"/><path fill="#333c60" d="M19 18h2v7h-2z"/></svg></i>
    <i class="run"><svg viewBox="0 0 40 40"><circle cx="20" cy="20" r="15" fill="#fbce3d"/><path fill="#db4a3c" d="M7 12.500A15 15 0 0 1 33 12.500H20L13.500 24z"/><path fill="#1c9e57" d="M7 12.500A15 15 0 0 0 19 35l7-11-12.500 0z"/><circle cx="20" cy="20" r="7.500" fill="#fff"/><circle cx="20" cy="20" r="6" fill="#4688f1"/></svg></i>
    <i><svg viewBox="0 0 40 40"><rect x="4" y="3" width="32" height="34" rx="4" fill="#ef7f22"/><path stroke="#ffb26b" d="M5 28 30 14M8 35l26-14"/><text x="20" y="25" text-anchor="middle" font-size="14" font-weight="700" font-family="Roboto" fill="#fff" transform="rotate(-25 20 20)">PDF</text></svg></i>
    <i><svg viewBox="0 0 40 40"><rect x="3" y="4" width="34" height="33" rx="3" fill="#f3f5fc"/><path fill="url(#gBird)" d="m6 10 15 7q1-9 5-10l8 1-4 3q1 10-6 15l2 8-8-8-8-1 5-5q-7-3-9-10z"/></svg></i>
    <i><svg viewBox="0 0 40 40"><rect x="4" y="4" width="33" height="34" rx="6" fill="#fff"/><g fill="none" stroke="#2f7df6" stroke-width="3.500"><circle cx="20" cy="14" r="5"/><circle cx="13.500" cy="23" r="5"/><circle cx="26.500" cy="23" r="5"/></g><path fill="#e64532" d="M15 35h5v3h-5z"/><path fill="#2f7df6" d="M20 35h6v3h-6z"/></svg></i>
    <i><svg viewBox="0 0 40 40"><path fill="#fff" stroke="#1e7145" d="M20 9h15v22H20z"/><path stroke="#1e7145" stroke-width="1.500" d="M22 13h11M22 17h11M22 21h11M22 25h11M28 11v18"/><path fill="#1e7145" d="m5 8 17-4v32L5 32z"/><text x="13.500" y="26" text-anchor="middle" font-size="16" font-weight="700" font-family="Open Sans" fill="#fff">X</text></svg></i>
    <i><svg viewBox="0 0 40 40"><path fill="#fff" stroke="#80397b" d="M20 9h14v22H20z"/><path stroke="#80397b" stroke-width="1.500" d="M22 13h10M22 17h10M22 21h10M22 25h10"/><path fill="#80397b" d="m5 8 17-4v32L5 32z"/><text x="13.500" y="26" text-anchor="middle" font-size="16" font-weight="700" font-family="Open Sans" fill="#fff">N</text></svg></i>
    <i><svg viewBox="0 0 40 40"><path fill="#fff" stroke="#0072c6" d="M20 12h15v16H20z"/><path fill="none" stroke="#0072c6" stroke-width="2" d="m21 14 6 7 8-8"/><path fill="#0072c6" d="m5 8 17-4v32L5 32z"/><text x="13.500" y="26" text-anchor="middle" font-size="15" font-weight="700" font-family="Open Sans" fill="#fff">O</text></svg></i>
    <i><svg viewBox="0 0 40 40"><path fill="#fff" stroke="#d24726" d="M20 9h15v22H20z"/><circle cx="27" cy="16" r="4.500" fill="#d24726"/><path stroke="#d24726" stroke-width="1.500" d="M23 24h10M23 27h10"/><path fill="#d24726" d="m5 8 17-4v32L5 32z"/><text x="13.500" y="26" text-anchor="middle" font-size="16" font-weight="700" font-family="Open Sans" fill="#fff">P</text></svg></i>
    <i><svg viewBox="0 0 40 40"><path fill="#fff" stroke="#2a5699" d="M20 9h14v22H20z"/><path stroke="#2a5699" stroke-width="1.500" d="M22 13h10M22 17h10M22 21h10M22 25h10"/><path fill="#2a5699" d="m5 8 17-4v32L5 32z"/><text x="13.500" y="26" text-anchor="middle" font-size="14" font-weight="700" font-family="Open Sans" fill="#fff">W</text></svg></i>
    <i class="run"><svg class="s32"><use href="#dyna"/></svg></i>
    <i class="run"><svg class="s32"><use href="#nut"/></svg></i>
    <i class="run"><svg viewBox="0 0 40 40"><g fill="#6cba32" stroke="#a6dc6b"><ellipse cx="15" cy="12" rx="6" ry="8" transform="rotate(-15 15 12)"/><ellipse cx="26" cy="12" rx="6" ry="8" transform="rotate(20 26 12)"/><ellipse cx="12" cy="22" rx="8" ry="5.500" transform="rotate(-20 12 22)"/><ellipse cx="28" cy="22" rx="8" ry="5.500" transform="rotate(20 28 22)"/><ellipse cx="24" cy="29" rx="5" ry="7" transform="rotate(-20 24 29)"/></g><path stroke="#5da028" stroke-width="2.500" fill="none" d="M20 18q-1 11-6 17"/></svg></i>
    <i class="run"><svg viewBox="0 0 40 40"><circle cx="20" cy="20" r="16" fill="#fff"/><path fill="#22ad34" d="M15 9q9-4 13 2 2 8 0 16-2 4-7 4l-1-3 4-1v-3q-5 1-7-2l-5-1q-2-4-1-8h4z"/><circle cx="24" cy="17" r="1.200" fill="#fff"/></svg></i>
    <i class="run"><svg viewBox="0 0 40 40"><path fill="#3b97e3" d="M4 4h32v32H4z"/><path fill="#7cc4f3" d="M4 4h17q0 13-17 16z"/><path fill="#62b1ec" d="M4 36q0-16 16-16V36z"/><path fill="#2b6fd1" d="M20 36q0-14 16-14v14z"/><path fill="#fff" d="m11 9 4 1-2 5-3-1zM27 27l3 2-1 3h-4z"/></svg></i>
    <i class="run light"><svg viewBox="0 0 40 40"><path fill="#f5f5f5" stroke="#e0e0e0" d="m6 7 25-2 3 27-26 2z"/><text x="20" y="27" text-anchor="middle" font-size="20" font-family="Liberation Serif" fill="#444">T</text></svg></i>
  </div>
  <svg class="tray" viewBox="0 0 180 40"><g fill="#c9cccf"><path d="M3 17h16v8H3z"/><path fill="none" stroke="#c9cccf" d="M7 16q0-3 4-3t5-2"/></g><path stroke="#444" stroke-dasharray="1.500 1" d="M5 19.500h12M5 22.500h12"/><circle cx="32" cy="18" r="7" fill="#1620b8" stroke="#c8d0e0" stroke-width="1.300"/><text x="32" y="22.500" text-anchor="middle" font-size="12" font-weight="700" font-family="Open Sans" fill="#fff">?</text><path fill="none" stroke="#fff" d="M51.500 11.500h4v3h-4zM53.500 11V9.500h5v3H56"/><path fill="#fff" d="M51.500 22h5l-2.500 3zM69 22h7l-3.500-4z"/><rect x="89" y="14" width="15" height="15" rx="2" fill="#c7161d" stroke="#f0b9b9"/><path fill="none" stroke="#fff" stroke-width="1.700" d="M92 25q7-1 8-8m-3 0h4v4M91 19v8h9"/><path stroke="#fff" stroke-width="1.300" d="M115 14v14"/><path fill="#eee" d="M116 15h4l1 2h4v7h-9z"/><circle cx="124" cy="24" r="4.500" fill="#d42c24"/><path stroke="#fff" stroke-width="1.400" d="m122 22 4 4M126 22l-4 4"/><path fill="#fff" d="M139 25h1.500v2H139zM142 23h2v4h-2zM145 21h2v6h-2zM148.500 18.500h2V27h-2zM151.500 16h2v11h-2z"/><path fill="#fff" d="M163 19h3l4-4v14l-4-4h-3z"/><path fill="none" stroke="#fff" d="M172 18q2 4 0 8M174.500 16q4 6 0 12"/></svg>
  <div class="clock"><span>15:19</span><span>2018/10/7</span></div>
  <b class="peek"></b>
</footer>
</div>
</body>
</html>
```

FILE: styles.css
```css
* { box-sizing: border-box; }
body { margin: 0; font: 12px/16px "Open Sans", "Noto Sans CJK SC", sans-serif; color: #111; }
i, em { font-style: normal; }
u { text-decoration: none; }
ul, p { margin: 0; padding: 0; list-style: none; }
svg { display: block; width: 16px; height: 16px; flex: none; }
svg.defs { position: absolute; width: 0; height: 0; }
svg.symbols { display: none; }
.desktop { position: relative; width: 1920px; height: 1080px; overflow: hidden; background: #05070c; }

/* browser */
.chrome { display: flex; flex-direction: column; height: 1040px; }
.tabs { position: relative; display: flex; height: 34px; padding-left: 8px; background: radial-gradient(ellipse 30px 9px at 1780px 26px, #5f7080, transparent), linear-gradient(90deg, #333438 0, #0a0b0e 1%, #05060a 92%, #1a1e22); }
.tabs::after { content: ""; position: absolute; left: 20px; top: 8px; width: 370px; height: 26px; pointer-events: none; background: radial-gradient(ellipse 22px 18px at 20px 18px, rgba(225,240,255,.6), transparent), radial-gradient(ellipse 32px 18px at 102px 16px, rgba(240,150,150,.4), transparent), radial-gradient(ellipse 30px 18px at 178px 18px, rgba(190,235,190,.55), transparent), radial-gradient(ellipse 22px 18px at 260px 18px, rgba(235,245,255,.55), transparent), radial-gradient(ellipse 22px 18px at 340px 18px, rgba(235,245,255,.5), transparent); }
.pins { display: flex; width: 152px; }
.pins i { width: 38px; padding: 9px 0 0 11px; background: #babbc0; border-radius: 8px 8px 0 0; border-right: 1px solid #929398; }
.pins i:first-child { padding-left: 10px; }
.tab { display: flex; align-items: center; gap: 8px; width: 68.150px; padding-left: 8px; background: #b5b6bb; border-radius: 9px 9px 0 0; border-right: 1px solid #8c8d92; color: #5a5c61; white-space: nowrap; }
.tab span { flex: 1; overflow: hidden; line-height: 20px; -webkit-mask-image: linear-gradient(90deg, #000 20px, transparent 31px); mask-image: linear-gradient(90deg, #000 20px, transparent 31px); margin-right: 2px; }
.tab.active { background: #fff; border-color: #fff; }
.tab.active span { flex: none; width: 9px; margin: 0; }
.tab svg.x { width: 9px; height: 9px; stroke: #5f6368; stroke-width: 1.6; }
.plus { display: grid; place-items: center; width: 28px; height: 28px; margin: 3px 0 0 8px; border-radius: 50%; background: #b5b7ba; }
.plus svg { width: 14px; height: 14px; stroke: #44474b; stroke-width: 1.8; }
.winctl { width: 104px; height: 19px; margin-left: auto; margin-right: 2px; }
.toolbar { display: flex; align-items: center; height: 36px; background: #fff; padding-left: 16px; }
.nav { width: 128px; height: 18px; margin-right: -4px; }
.omni { display: flex; align-items: center; width: 1303px; height: 28px; padding: 0 10px 0 13px; border-radius: 14px; background: #f1f2f4; }
.lock { width: 9px; height: 12px; }
.url { flex: 1; margin-left: 12px; font: 14px/20px "Open Sans", sans-serif; color: #7a7e83; letter-spacing: .2px; }
.url b { font-weight: 400; color: #202124; }
.exts { display: flex; padding-left: 9px; }
.exts i { position: relative; width: 32px; padding-left: 8px; }
.exts em { position: absolute; left: 18px; top: 10px; width: 12px; height: 12px; background: #5a5a5a; border-radius: 2px; color: #fff; font-size: 11px; line-height: 12px; text-align: center; }
.exts em.red { background: #ee3030; }
.user { width: 70px; height: 24px; }
.marks { display: grid; grid-template-columns: 64px 106px 111px 129px 88px 155px 154px 122px 138px 110px 109px 139px 153.500px 111px 180px 1fr; align-items: center; height: 32px; padding: 0 0 2px 14px; background: #fff; border-bottom: 1px solid #b0b1b4; color: #55585d; white-space: nowrap; }
.marks a { display: flex; align-items: center; gap: 8px; overflow: hidden; letter-spacing: .12px; }
.marks a.cut { -webkit-mask-image: linear-gradient(90deg, #000 118px, transparent 138px); mask-image: linear-gradient(90deg, #000 118px, transparent 138px); }
.marks svg { height: 15px; }
.marks b { justify-self: end; padding-right: 18px; font-size: 17px; font-weight: 600; }
.page { display: flex; flex: 1; }
.view { position: relative; flex: 1; background: #f6f3eb; }
.jnav { display: flex; align-items: center; height: 56px; padding-left: 253px; border-bottom: 1px solid #f1efe9; }
.logo { width: 234px; font-size: 28px; line-height: 40px; color: #ee7561; letter-spacing: 1px; font-weight: 500; }
.item { display: flex; align-items: center; gap: 5px; width: 99px; padding-bottom: 1px; color: #333; font-size: 17px; line-height: 24px; }
.item svg { width: 20px; height: 20px; }
.item + .item { width: 129px; gap: 4px; font-size: 16.500px; }
.search { display: flex; align-items: center; justify-content: space-between; width: 240px; height: 38px; padding: 0 12px 0 20px; border-radius: 19px; background: #edecea; color: #999; font-size: 14.500px; }
.search svg { fill: none; stroke: #999; stroke-width: 1.200; }
.aa { width: 57px; margin-left: 381px; color: #969696; font: 700 19px "Liberation Serif", serif; }
.login { width: 64px; color: #969696; font-size: 15.500px; }
.reg { width: 80px; height: 38px; margin-right: 20px; border: 1px solid #ed8270; border-radius: 19px; color: #ea6f5a; font-size: 15px; line-height: 35px; text-align: center; }
.write { display: flex; align-items: center; gap: 4px; width: 100px; height: 40px; padding: 0 0 2px 17px; border-radius: 20px; background: #ea6f5a; color: #fff; font-size: 15.500px; white-space: nowrap; }
.write svg { height: 18px; }
.article { display: flex; align-items: flex-start; padding-left: 632px; }
.shot { display: flex; flex-direction: column; align-items: center; width: 640px; height: 800px; padding-top: 38px; background: #edebee; margin-right: 60px; }
.up { width: 106px; height: 40px; border-radius: 6px; background: linear-gradient(#72b4fb, #1c7ffb); border: 1px solid #4f93df; color: #e8f8ff; font-size: 25px; line-height: 37px; text-align: center; }
.restore { margin-top: 13px; font-size: 21.500px; line-height: 32px; color: #111; }
.ad { width: 180px; height: 180px; margin-top: 24px; border: 1px solid #e6e6e6; background: #fafafa; }
.ad svg { width: 180px; height: 130px; margin: -1px; }
.side { position: absolute; left: 1811px; top: 785px; width: 52px; border: 1px solid #dcdcdc; background: #fff; }
.side i { display: grid; place-items: center; height: 50px; }
.side i + i { height: 51px; border-top: 1px solid #dcdcdc; }
.side svg { width: 18px; height: 18px; fill: none; stroke: #4a4a4a; stroke-width: 1.200; }
.drawer { position: absolute; left: 0; top: 12px; width: 24px; height: 26px; display: grid; place-items: center; background: #2f323a; }
.drawer svg { width: 20px; height: 20px; fill: none; stroke: #fff; stroke-width: 1.800; }
.vbar { display: flex; flex-direction: column; align-items: center; width: 17px; padding: 7px 0; background: #f1f1f1; }
.vbar b { width: 13px; height: 84px; margin: 356px 0 auto; background: #c1c1c1; }
.u, .d { border: 4px solid transparent; }
.u { border-bottom: 4px solid #505050; border-top: 0; }
.d { border-top: 4px solid #505050; border-bottom: 0; }

/* file explorer */
.win { position: absolute; display: flex; flex-direction: column; }
.explorer { left: 348px; top: 298px; width: 1169px; height: 760px; padding: 0 6px; border: 1px solid #555b5d; border-radius: 7px 7px 0 0; background: linear-gradient(90deg, #fbffff 0, #fbffff 283px, #effffe 300px, #effffe 920px, #fafefe 940px); box-shadow: 0 0 9px rgba(0,0,0,.6), inset 0 0 0 1px #fff; }
.etop { height: 19px; display: flex; justify-content: flex-end; }
.ectl { width: 134px; height: 19px; margin-right: -4px; }
.etabs { display: flex; height: 25px; padding-left: 7px; }
.wrench { margin-top: 3px; height: 14px; width: 15px; }
.etab { display: flex; align-items: center; gap: 5px; width: 202px; height: 25px; padding: 2px 10px 0 18px; margin-left: 4px; background: #a3a7ad; clip-path: polygon(0 100%, 9px 2px, 14px 0, calc(100% - 14px) 0, calc(100% - 9px) 2px, 100% 100%); position: relative; z-index: 0; }
.etab::before { content: ""; position: absolute; inset: 1px; z-index: -1; background: #dcdfe7; clip-path: polygon(0 100%, 9px 2px, 14px 0, calc(100% - 14px) 0, calc(100% - 9px) 2px, 100% 100%); }
.etab.on { width: 213px; margin-left: -9px; padding: 2px 18px 0 15px; letter-spacing: .1px; }
.etab.on::before { background: #fff; bottom: 0; }
.etab u { margin-left: auto; color: #999; font-size: 16px; }
.eplus { width: 28px; height: 16px; margin: 5px 0 0 -7px; }
.ebody { flex: 1; display: flex; flex-direction: column; min-height: 0; border: solid #a3a7ab; border-width: 1px 1px 0; background: #fcfcfc; }
.emarks { display: grid; grid-template-columns: 81px 57px 57px 57px 97px 147px 60px; align-items: center; height: 26px; padding-left: 7px; background: linear-gradient(#fff, #ebebeb); border-bottom: 1px solid #b5b9bb; }
.emarks a { display: flex; align-items: center; gap: 5px; white-space: nowrap; }
.eaddr { display: flex; align-items: center; height: 36px; padding: 0 0 6px 1px; background: #f4ffff; }
.bf { width: 72px; height: 28px; }
.abox { display: flex; align-items: center; flex: 1; height: 24px; padding: 0 0 2px 1px; margin: 0 12px 0 -1px; border: 1px solid #8c9599; background: #fff; color: #5b5f63; white-space: nowrap; }
.abox u { border: 4px solid transparent; border-left: 5px solid #000; border-right: 0; margin: 0 9px 0 11px; }
.abox svg + u { margin-left: 9px; }
.abox span { letter-spacing: .1px; }
.ecmd { display: grid; grid-template-columns: 68px 104px 67px auto; align-items: center; height: 30px; padding: 0 0 3px 18px; background: linear-gradient(#f8fbfe 0, #e9f0f9 45%, #dae5f3 46%, #dde8f5); border-bottom: 1px solid #9fb3cb; color: #1e395b; }
.ecmd u { display: inline-block; border: 4px solid transparent; border-top-color: #1e395b; border-bottom: 0; margin: 0 0 2px 5px; }
.epanes { display: flex; height: 570px; overflow: hidden; }
.tree { width: 258px; padding-top: 9px; }
.tree li { display: flex; align-items: center; gap: 5px; height: 23px; margin: 0 1px; padding-left: 28px; border: 1px solid transparent; white-space: nowrap; }
.tree li.l { letter-spacing: .25px; }
.tree li.h { padding-left: 18px; }
.tree li.gap { margin-top: 23px; }
.tree li.sel { border-color: #d9d9d9; border-radius: 3px; background: linear-gradient(#f8f8f8, #e5e5e5); }
.esb { display: flex; flex-direction: column; align-items: center; width: 15px; padding: 7px 0; background: #f0f0f0; }
.esb .u, .esb .d { border-left-width: 3px; border-right-width: 3px; }
.esb b { display: grid; place-items: center; width: 14px; height: 491px; margin: 7px 0 auto; border: 1px solid #9b9b9f; border-radius: 2px; background: linear-gradient(90deg, #f5f5f5 0, #e3e3e5 45%, #c7c7ca); }
.esb s { width: 7px; height: 9px; background: repeating-linear-gradient(#555 0 1px, transparent 1px 4px); }
.files { flex: 1; margin-left: 2px; padding: 5px 0 0 19px; border-left: 1px solid #d5e3f2; letter-spacing: .22px; }
.files p { display: flex; align-items: center; gap: 4px; height: 21px; }
.files .col { position: relative; left: -1px; height: 17px; margin-bottom: 11px; color: #4c607a; letter-spacing: 0; }
.files .col::after { content: ""; position: absolute; left: 121px; top: -4px; border: 3px solid transparent; border-bottom-color: #4b7ca5; border-top: 0; }
.estat { display: flex; flex: 1; padding: 4px 0 0 20px; gap: 27px; background: #f0f4fc; border-top: 1px solid #c9d8ea; color: #37526f; font-size: 13px; line-height: 19px; }
.estat svg { width: 32px; height: 32px; }

/* editor */
.typora { left: 885px; top: 318px; width: 800px; height: 600px; padding: 0 6px 6px; border: 1px solid #20252b; border-radius: 7px; background: linear-gradient(90deg, #b3d8fd 0, #b3d8fd 620px, #a6c9e8 630px, #cfe4f7 740px); box-shadow: inset 0 0 0 1px #e6f3ff, 2px 3px 16px 1px rgba(0,0,0,.85); }
.ttitle { display: flex; align-items: center; height: 28px; padding: 1px 0 2px 2px; }
.ttitle svg { width: 14px; height: 14px; }
.ttitle svg.tctl { width: 104px; height: 20px; align-self: flex-start; margin-left: auto; margin-right: -1px; margin-top: -1px; }
.ttitle span { margin-left: 5px; padding: 0 8px 0 0; letter-spacing: .2px; background: radial-gradient(closest-side, rgba(255,255,255,.7), transparent); }
.tbody { flex: 1; display: flex; flex-direction: column; border: 1px solid #4c5a69; background: #fff; min-height: 0; }
.tmenu { display: grid; grid-template-columns: 51px 51px 52px 54px 53px 51px auto; align-items: center; height: 20px; padding: 2px 0 0 6px; background: #f0f0f0; }
.tedit { display: flex; flex: 1; min-height: 0; }
.doc { width: 640px; margin-left: 32px; padding-top: 48px; overflow: hidden; }
.src { display: flex; align-items: center; height: 25px; margin-bottom: 2px; color: #333; white-space: nowrap; }
.src svg { width: 15px; height: 14px; margin: 4px 2px 0 4px; }
.lead { width: 17px; margin-left: -1px; font-size: 14.500px; padding-top: 3px; letter-spacing: -.2px; }
.src code { font: 14.400px/20px "DejaVu Sans Mono", monospace; color: #444; }
.src q { quotes: none; text-decoration: underline wavy #e02020 1px; text-underline-offset: 2px; text-decoration-skip-ink: none; }
.mac { width: 640px; background: #edebee; }
.mhead { height: 156px; padding-top: 9px; background: linear-gradient(#eae6eb, #cfcacf); border-bottom: 1px solid #aaa5aa; border-radius: 6px 6px 0 0; }
.mrow { display: grid; grid-template-columns: 40px 40px 40px 1fr; height: 35px; padding-left: 16px; }
.mrow i { width: 24px; height: 24px; margin-top: 1px; border: 1px solid #cf4a47; border-radius: 50%; background: #fc5b57; }
.mrow i:nth-child(2) { background: #fdbc40; border-color: #cf9a3a; }
.mrow i:nth-child(3) { background: #cfcdd0; border-color: #b1aeb2; }
.mrow span { padding-left: 158px; font-size: 25px; line-height: 26px; color: #333; }
.mtabs { display: grid; grid-template-columns: 80px 80px 80px; padding-left: 8px; }
.mtabs div { display: flex; flex-direction: column; align-items: center; height: 111px; padding-top: 8px; font-size: 21.500px; line-height: 30px; color: #111; }
.mtabs svg { width: 61px; height: 61px; margin-bottom: 3px; overflow: visible; }
.mtabs .msel { background: rgba(120,115,125,.26); border-radius: 6px 6px 0 0; }
.mmain { display: flex; flex-direction: column; align-items: center; height: 300px; padding-top: 44px; color: #222; }
.plogo { width: 120px; height: 120px; }
.mmain strong { margin-top: 20px; font: 700 26px/40px Roboto, "Noto Sans CJK SC", sans-serif; }
.mmain span { margin-top: 9px; font-size: 26px; line-height: 38px; }
.tsb { width: 8px; height: 333px; margin-left: auto; background: #b0b0b0; }
.tstat { display: flex; align-items: center; justify-content: space-between; height: 31px; padding: 2px 15px 0 6px; border-top: 1px solid #ddd; color: #777; font-size: 12.500px; }
.tstat svg { width: 46px; height: 14px; }

/* taskbar */
.task { position: absolute; left: 0; top: 1040px; width: 1920px; height: 40px; display: flex; background: #070b11; border-top: 1px solid #737a82; overflow: hidden; }
.glow { position: absolute; left: 358px; top: -8px; width: 1154px; height: 28px; background: #aed2f7; filter: blur(4px); }
.apps { position: relative; display: flex; align-items: center; gap: 4px; flex: none; width: 1500px; }
.apps i { display: grid; place-items: center; width: 58px; height: 38px; }
.apps i:first-child { width: 54px; margin-right: 2px; }
.apps svg { width: 37px; height: 37px; }
.apps svg.s32 { width: 32px; height: 32px; }
.run { border: 1px solid #6a7075; border-radius: 3px; background: linear-gradient(160deg, rgba(255,255,255,.5), rgba(255,255,255,.15) 60%, rgba(255,255,255,.08)); }
.run.light { background: linear-gradient(rgba(235,240,245,.75), rgba(180,183,186,.75)); border-color: #c5c8ca; }
.tray { width: 180px; height: 40px; margin: -1px 1px 0 144px; }
.clock { display: flex; flex-direction: column; justify-content: center; width: 84px; color: #fff; text-align: center; line-height: 18px; letter-spacing: .1px; }
.peek { width: 13px; margin-left: -3px; height: 38px; border: 1px solid #5e6468; background: linear-gradient(135deg, #4a4f53, #101418 50%); }
```
